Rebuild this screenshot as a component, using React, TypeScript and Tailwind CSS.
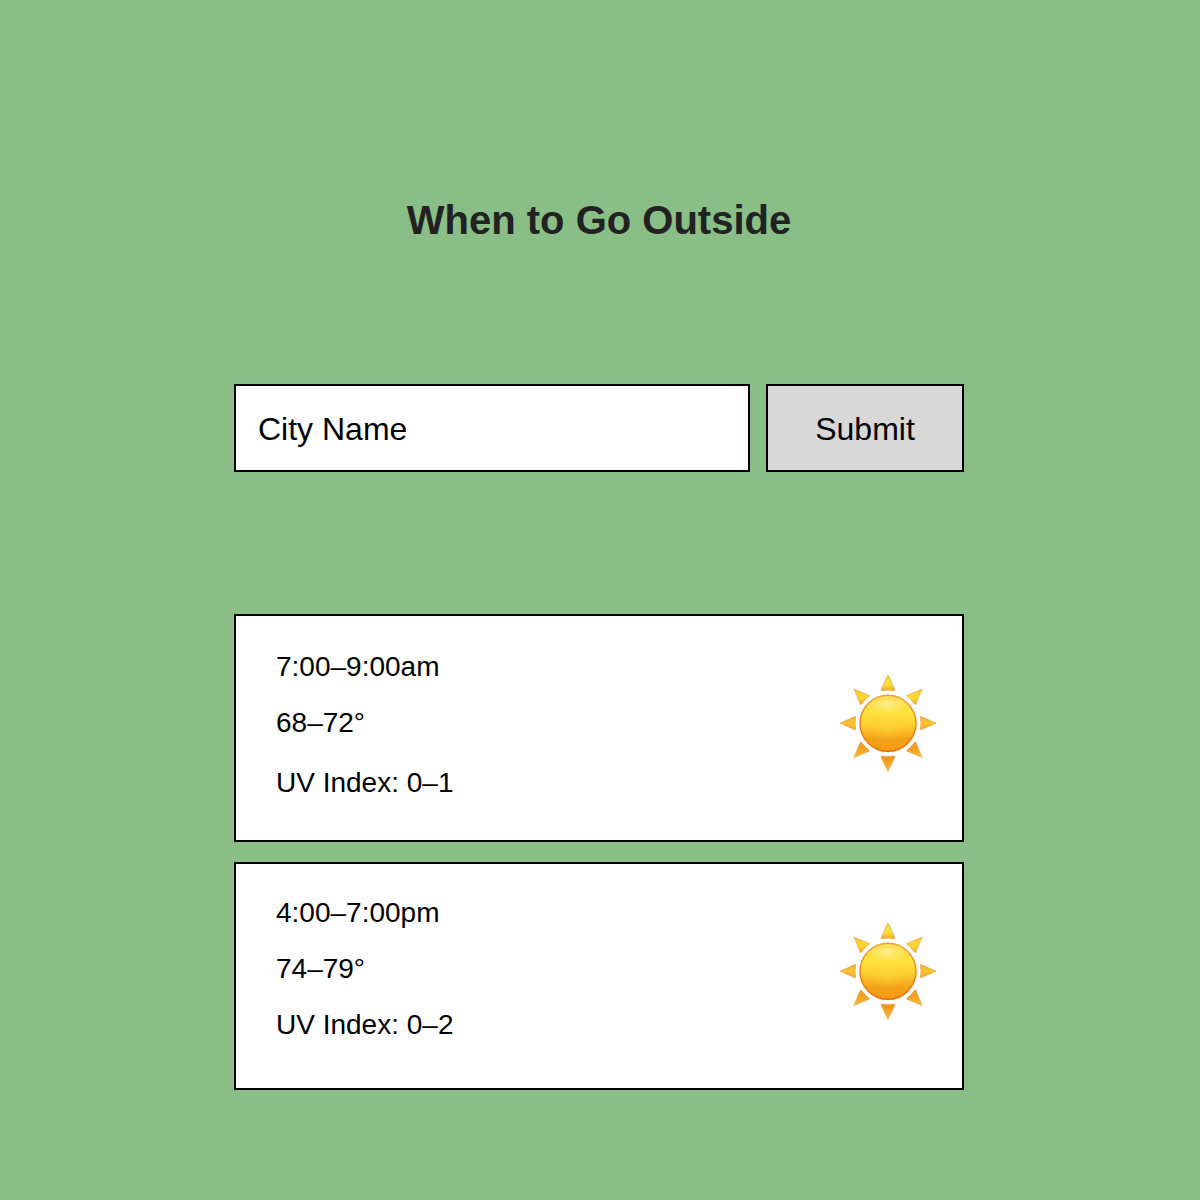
import { useId } from "react";

const rays = [
  { d: "M50 2.2 Q50.6 2.2 50.9 3 L56.8 16.6 Q57.1 17.8 56.1 17.7 Q50 16.6 43.9 17.7 Q42.9 17.8 43.2 16.6 L49.1 3 Q49.4 2.2 50 2.2Z", fill: "top" },
  { d: "M84.2 16 L77.8 31.2 Q77.4 32 76.7 31.4 Q73.2 26.6 68.8 23.3 Q68.2 22.6 69 22.2Z", fill: "upper" },
  { d: "M98.2 50.2 L83.4 56.7 Q82.3 57 82.4 55.9 Q83.4 50.2 82.4 44.3 Q82.3 43.2 83.4 43.6Z", fill: "side" },
  { d: "M84.2 84.6 L69 78.3 Q68.2 77.9 68.8 77.2 Q73.2 73.8 76.7 69.2 Q77.4 68.6 77.8 69.4Z", fill: "lower" },
  { d: "M50 98.6 L43.2 84.2 Q42.9 82.8 43.9 82.9 Q50 84 56.1 82.9 Q57.1 82.8 56.8 84.2Z", fill: "lower" },
  { d: "M15.8 84.6 L22.2 69.4 Q22.6 68.6 23.3 69.2 Q26.8 73.8 31.2 77.2 Q31.8 77.9 31 78.3Z", fill: "lower" },
  { d: "M1.8 50.2 L16.6 43.6 Q17.7 43.2 17.6 44.3 Q16.6 50.2 17.6 55.9 Q17.7 57 16.6 56.7Z", fill: "side" },
  { d: "M15.8 16 L31 22.2 Q31.8 22.6 31.2 23.3 Q26.8 26.6 23.3 31.4 Q22.6 32 22.2 31.2Z", fill: "upper" },
];

const rayStops: Record<string, [string, string, string]> = {
  top: ["#f8d038", "#ffe03a", "#f5ac28"],
  upper: ["#f7c934", "#fed836", "#f3a527"],
  side: ["#f2b02c", "#fdc630", "#f3a52a"],
  lower: ["#f0921c", "#f7a522", "#fbc236"],
};

function Sun() {
  const id = useId();
  return (
    <svg viewBox="0 0 100 100" className="size-25 shrink-0" role="img" aria-label="Sunny">
      <defs>
        {Object.entries(rayStops).map(([name, [from, middle, to]]) => (
          <linearGradient key={name} id={`${id}-${name}`} x1="0" y1="0" x2="0" y2="1">
            <stop offset="0" stopColor={from} />
            <stop offset="0.55" stopColor={middle} />
            <stop offset="1" stopColor={to} />
          </linearGradient>
        ))}
        <linearGradient id={`${id}-disc`} x1="0" y1="0" x2="0" y2="1">
          <stop offset="0" stopColor="#fbd23e" />
          <stop offset="0.3" stopColor="#ffe33e" />
          <stop offset="0.5" stopColor="#fdd232" />
          <stop offset="0.78" stopColor="#f4a31a" />
          <stop offset="1" stopColor="#f59a12" />
        </linearGradient>
        <linearGradient id={`${id}-rim`} x1="0" y1="0" x2="0" y2="1">
          <stop offset="0" stopColor="#e8a238" />
          <stop offset="1" stopColor="#e5740f" />
        </linearGradient>
        <radialGradient id={`${id}-gloss`} cx="0.5" cy="0.4" r="0.5">
          <stop offset="0" stopColor="#fff7b4" stopOpacity="0.75" />
          <stop offset="1" stopColor="#fff08a" stopOpacity="0" />
        </radialGradient>
        <radialGradient id={`${id}-glow`} cx="0.5" cy="0.5" r="0.5">
          <stop offset="0" stopColor="#ffdc3c" stopOpacity="0.5" />
          <stop offset="1" stopColor="#ffdc3c" stopOpacity="0" />
        </radialGradient>
      </defs>
      {rays.map((ray) => (
        <path
          key={ray.d}
          d={ray.d}
          fill={`url(#${id}-${ray.fill})`}
          stroke="#cf8a40"
          strokeOpacity="0.6"
          strokeWidth="0.7"
          strokeLinejoin="round"
        />
      ))}
      <circle cx="50" cy="50.3" r="28" fill={`url(#${id}-disc)`} stroke={`url(#${id}-rim)`} strokeWidth="1.6" />
      <ellipse cx="50" cy="33" rx="22" ry="10" fill={`url(#${id}-gloss)`} />
      <ellipse cx="50" cy="54" rx="18" ry="14" fill={`url(#${id}-glow)`} />
    </svg>
  );
}

const windows = [
  { time: "7:00–9:00am", temperature: "68–72°", uv: "UV Index: 0–1", textClass: "pt-[23px]", uvClass: "mt-1" },
  { time: "4:00–7:00pm", temperature: "74–79°", uv: "UV Index: 0–2", textClass: "pt-[21px]", uvClass: "" },
];

export default function App() {
  return (
    <main className="min-h-screen bg-[#8abe87] pt-49 pb-[110px] pl-4 pr-[18px] font-['Liberation_Sans',Arial,sans-serif] text-black">
      <div className="mx-auto max-w-[730px]">
        <h1 className="text-center text-[40px] leading-12 font-bold text-[#222222]">When to Go Outside</h1>

        <form className="mt-35 flex gap-4" onSubmit={(event) => event.preventDefault()}>
          <input
            type="text"
            aria-label="City Name"
            placeholder="City Name"
            className="h-22 min-w-0 flex-1 rounded-none border-2 border-black bg-white px-[22px] pt-0.5 text-[32px] placeholder:text-black placeholder:opacity-100"
          />
          <button type="submit" className="h-22 w-[198px] border-2 border-black bg-[#d8d8d8] pt-0.5 text-[32px]">
            Submit
          </button>
        </form>

        <ul className="mt-[142px] flex flex-col gap-5">
          {windows.map((slot) => (
            <li
              key={slot.time}
              className="flex min-h-57 items-start justify-between border-2 border-black bg-white pr-6 pl-10"
            >
              <div className={`text-[28px] leading-14 ${slot.textClass}`}>
                <p>{slot.time}</p>
                <p>{slot.temperature}</p>
                <p className={slot.uvClass}>{slot.uv}</p>
              </div>
              <div className="pt-[57px]">
                <Sun />
              </div>
            </li>
          ))}
        </ul>
      </div>
    </main>
  );
}
